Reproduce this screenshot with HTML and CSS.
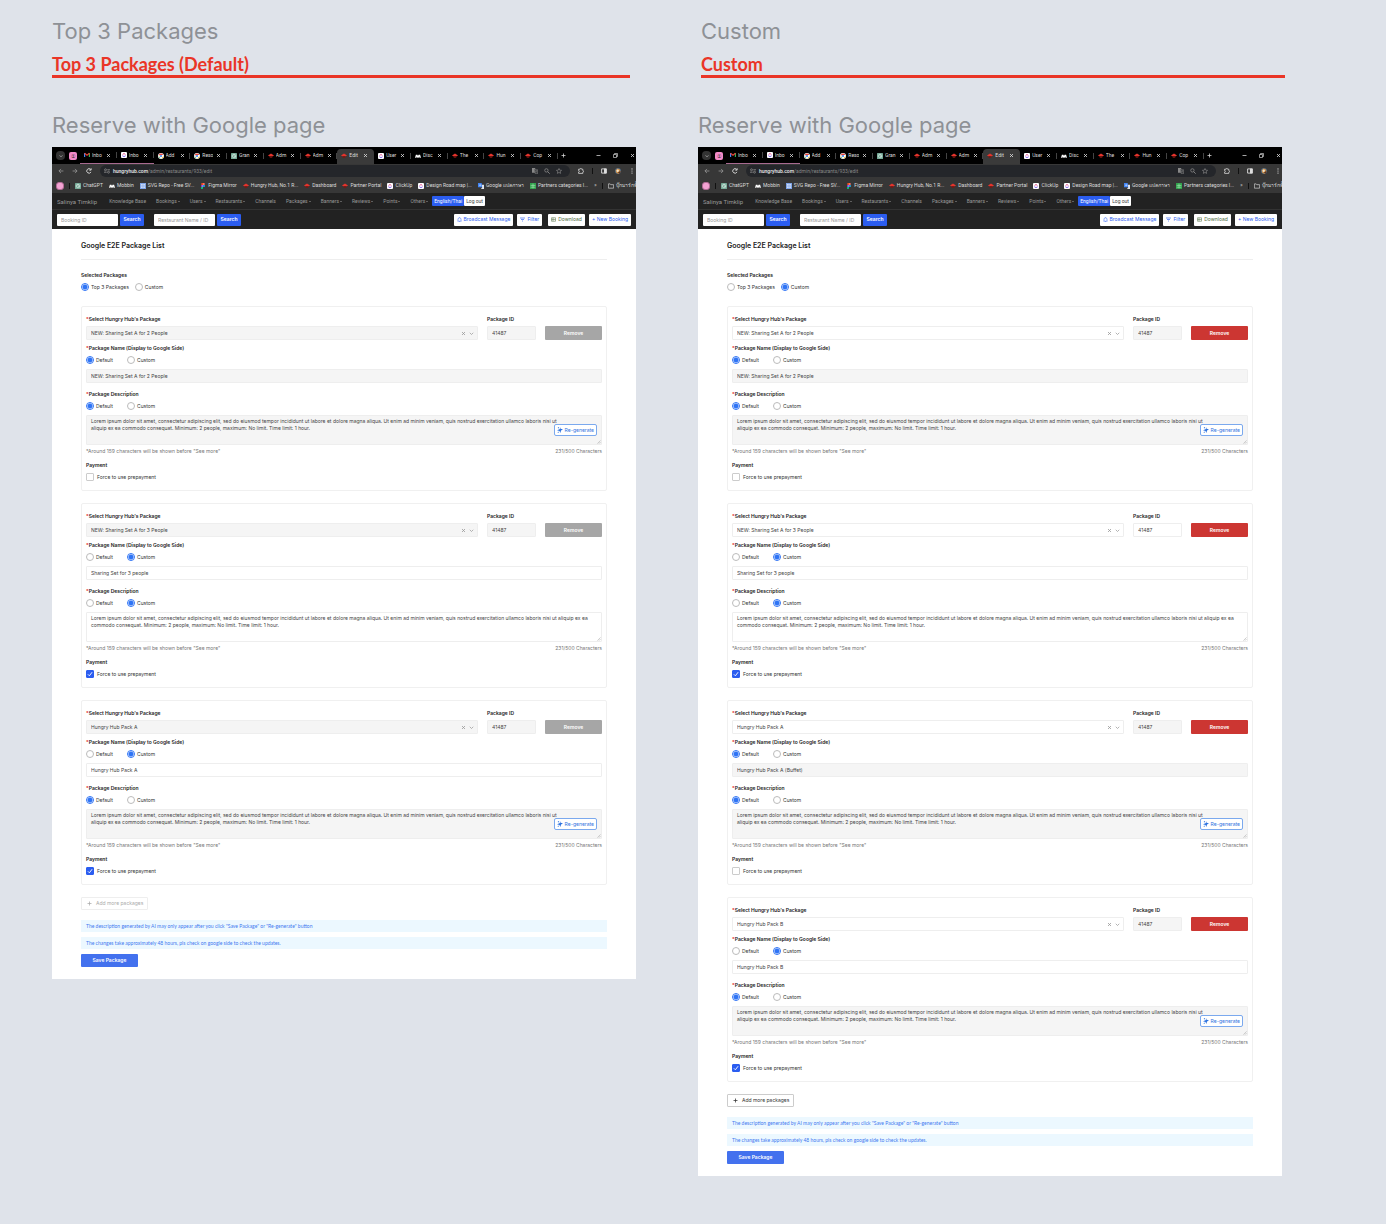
FILE: index.html
```html
<!DOCTYPE html>
<html lang="en">
<head>
  <meta charset="UTF-8">
  <meta name="viewport" content="width=device-width, initial-scale=1.0">
  <title>Reserve with Google page</title>
  <link rel="stylesheet" href="styles.css">
</head>
<body>
  <!-- Shared icons -->
  <svg class="sprite" aria-hidden="true">
    <symbol id="i-x" viewBox="0 0 10 10"><path d="M2 2l6 6M8 2L2 8" fill="none" stroke="currentColor" stroke-width="1.6"/></symbol>
    <symbol id="i-down" viewBox="0 0 10 10"><path d="M1.5 3.5L5 7l3.500-3.500" fill="none" stroke="currentColor" stroke-width="1.5"/></symbol>
    <symbol id="i-plus" viewBox="0 0 10 10"><path d="M5 1v8M1 5h8" fill="none" stroke="currentColor" stroke-width="1.500"/></symbol>
    <symbol id="i-min" viewBox="0 0 10 10"><path d="M1 5h8" stroke="currentColor" stroke-width="1.5"/></symbol>
    <symbol id="i-max" viewBox="0 0 10 10"><path d="M1 3h6v6H1zM3 3V1h6v6H7" fill="none" stroke="currentColor" stroke-width="1.3"/></symbol>
    <symbol id="i-back" viewBox="0 0 10 10"><path d="M9 5H1.500M5 1.500L1.500 5 5 8.500" fill="none" stroke="currentColor" stroke-width="1.3"/></symbol>
    <symbol id="i-fwd" viewBox="0 0 10 10"><path d="M1 5h7.500M5 1.500L8.500 5 5 8.500" fill="none" stroke="currentColor" stroke-width="1.3"/></symbol>
    <symbol id="i-reload" viewBox="0 0 10 10"><path d="M8.300 6.500A3.700 3.700 0 1 1 7.800 2.500M8.500 .5v3h-3" fill="none" stroke="currentColor" stroke-width="1.600"/></symbol>
    <symbol id="i-tune" viewBox="0 0 10 10"><path d="M5.500 3H10M0 7h4.500" stroke="currentColor" stroke-width="1.500"/><circle cx="2.500" cy="3" r="1.600" fill="none" stroke="currentColor" stroke-width="1.400"/><circle cx="7.500" cy="7" r="1.600" fill="none" stroke="currentColor" stroke-width="1.400"/></symbol>
    <symbol id="i-translate" viewBox="0 0 10 10"><path d="M0 0h5l1 2.500H3.500L5 8H0z" fill="currentColor"/><path d="M4 3h5.500v6.500H5.500z" fill="none" stroke="currentColor"/><path d="M5.500 5H9M7.200 4v1L5.800 7.500M6.300 5.500L8.500 8" fill="none" stroke="currentColor" stroke-width=".8"/></symbol>
    <symbol id="i-search" viewBox="0 0 10 10"><circle cx="4" cy="4" r="2.800" fill="none" stroke="currentColor" stroke-width="1.300"/><path d="M6 6l3.500 3.500" stroke="currentColor" stroke-width="1.500"/></symbol>
    <symbol id="i-star" viewBox="0 0 10 10"><path d="M5 .8l1.300 2.800 3 .3L7 6l.7 3L5 7.400 2.300 9 3 6 .7 3.900l3-.3z" fill="none" stroke="currentColor" stroke-width="1.100"/></symbol>
    <symbol id="i-ext" viewBox="0 0 10 10"><path d="M1 2h2.500a1.200 1.200 0 0 1 2.500 0H8v2.300a1.200 1.200 0 0 1 0 2.500V9H1V6.800a1.200 1.200 0 0 0 0-2.500z" fill="none" stroke="currentColor" stroke-width="1.300"/></symbol>
    <symbol id="i-panel" viewBox="0 0 10 10"><path d="M1 1.500h8v7H1z" fill="none" stroke="currentColor" stroke-width="1.500"/><path d="M5 1h4v8H5z" fill="currentColor"/></symbol>
    <symbol id="i-avatar" viewBox="0 0 10 10"><circle cx="5" cy="5" r="5" fill="#4d6a86"/><path d="M1 4l3-3 4 1 1 4-3 4-4-2z" fill="#c98b45"/><circle cx="4.500" cy="4.500" r="2" fill="#f3e3c8"/><path d="M5 7l4-2 .5 2L7 9.500z" fill="#5a3420"/></symbol>
    <symbol id="i-dots" viewBox="0 0 10 10"><circle cx="5" cy="1.500" r="1"/><circle cx="5" cy="5" r="1"/><circle cx="5" cy="8.500" r="1"/></symbol>
    <symbol id="i-folder" viewBox="0 0 10 10"><path d="M.6 8.600V1.500h3l1 1.300h4.800v5.800z" fill="none" stroke="currentColor" stroke-width="1.100"/></symbol>
    <symbol id="i-magic" viewBox="0 0 10 10"><path d="M6.500 0l-.8 3L10 3.800 6.800 5.800 5.500 10 4.200 6.500 0 5.500l4.200-1.800z" fill="currentColor"/><path d="M2 7l.4 1.200L3.500 8.500l-1 .5L2 10l-.5-1-1-.5 1.100-.3zM1.500.500h2v1.500h-2z" fill="currentColor"/></symbol>
    <symbol id="i-grip" viewBox="0 0 10 10"><path d="M1 9l8-8M5 9l4-4" stroke="currentColor" stroke-width="1.400"/></symbol>
    <symbol id="i-bell" viewBox="0 0 10 10"><path d="M1 8.500h8M2 8V4.500a3 3 0 0 1 6 0V8M4 9.500h2M5 .5v1" fill="none" stroke="currentColor"/></symbol>
    <symbol id="i-filter" viewBox="0 0 10 10"><path d="M0 2h10M2 5h6M4 8h2" stroke="currentColor" stroke-width="1.300"/></symbol>
    <symbol id="i-sheet" viewBox="0 0 10 10"><path d="M1 1.500h8v7H1zM4 1.500v7M1 5h8" fill="none" stroke="currentColor"/></symbol>
    <!-- favicons -->
    <symbol id="f-mail" viewBox="0 0 10 10"><path d="M1 8.500v-7" stroke="#4285f4" stroke-width="2"/><path d="M9 8.500v-7" stroke="#34a853" stroke-width="2"/><path d="M1 2l4 3.500L9 2" fill="none" stroke="#ea4335" stroke-width="2"/></symbol>
    <symbol id="f-click" viewBox="0 0 10 10"><rect width="10" height="10" rx="1.500" fill="#fff"/><path d="M2.500 4.500L5 2.300l2.500 2.200" fill="none" stroke="#e84a8a" stroke-width="1.500"/><path d="M2.300 6.300q2.700 3 5.400 0" fill="none" stroke="#7b5cf0" stroke-width="1.500"/></symbol>
    <symbol id="f-chrome" viewBox="0 0 10 10"><circle cx="5" cy="5" r="5" fill="#fff"/><path d="M1 4a4.200 4.200 0 0 1 8-.5H5z" fill="#ea4335"/><path d="M1 4.500L4.500 9A4.500 4.500 0 0 1 1 4.500" fill="#34a853"/><path d="M9.300 4.500L5.500 9a4.300 4.300 0 0 0 3.800-4.500" fill="#fbbc05"/><circle cx="5" cy="5" r="1.800" fill="#4285f4"/></symbol>
    <symbol id="f-gpt" viewBox="0 0 10 10"><rect width="10" height="10" rx="1" fill="#74a996"/><path d="M5 1.800l2.800 1.600v3.200L5 8.200 2.200 6.600V3.400zM5 1.800v3.400l2.800 1.400" fill="none" stroke="#fff" stroke-width=".8"/></symbol>
    <symbol id="f-hh" viewBox="0 0 10 10"><path d="M0 4l5-3 5 3-2 1.500H2z" fill="#e5342c"/><path d="M2.500 5.500h5L7 8H3z" fill="#7c1510"/></symbol>
    <symbol id="f-mob" viewBox="0 0 10 10"><path d="M0 8l1.500-5L4 3l1 2 1-2h2.500L10 8H7.500L7 6 6 8H4L3 6 2.500 8z" fill="#fff"/></symbol>
    <symbol id="f-svg" viewBox="0 0 10 10"><rect width="10" height="10" fill="#7ea4e8"/><path d="M2 2h2.300v2.300H2zM5.700 2H8v2.300H5.700zM2 5.700h2.300V8H2zM5.700 5.700H8V8H5.700z" fill="#fff"/></symbol>
    <symbol id="f-figma" viewBox="0 0 10 10"><path d="M5 0H3.500a1.600 1.600 0 0 0 0 3.300H5z" fill="#f24e1e"/><path d="M5 0h1.500a1.600 1.600 0 0 1 0 3.300H5z" fill="#ff7262"/><path d="M5 3.300H3.500a1.600 1.600 0 0 0 0 3.300H5z" fill="#a259ff"/><circle cx="6.600" cy="5" r="1.600" fill="#1abcfe"/><path d="M5 6.600H3.500A1.700 1.700 0 1 0 5 8.300z" fill="#0acf83"/></symbol>
    <symbol id="f-trans" viewBox="0 0 10 10"><path d="M0 0h6l1.500 7H0z" fill="#4285f4"/><path d="M6 3h4v7H5l2-3z" fill="#dfe4ec"/><path d="M4.500 3H3v1.500h1.500" fill="none" stroke="#fff"/></symbol>
    <symbol id="f-sheet" viewBox="0 0 10 10"><rect width="10" height="10" fill="#31a24c"/><path d="M5 1v8M1 4h8M1 7h8" stroke="#b9f0c4" stroke-width=".9"/></symbol>
  </svg>

  <main class="canvas">
    <section class="board">
      <h1>Top 3 Packages</h1>
      <h2>Top 3 Packages (Default)</h2>
      <p class="page-name">Reserve with Google page</p>
      <div class="window" id="top3"></div>
    </section>
    <section class="board board-custom">
      <h1>Custom</h1>
      <h2>Custom</h2>
      <p class="page-name">Reserve with Google page</p>
      <div class="window" id="custom"></div>
    </section>
  </main>

  <script src="script.js"></script>
</body>
</html>
```
FILE: styles.css
```css
* {
  margin: 0;
  padding: 0;
  box-sizing: border-box;
}

body {
  font-family: Inter, "Liberation Sans", sans-serif;
  background-color: #dfe3ea;
  color: #333;
}

button, input, select, textarea {
  font: inherit;
  color: inherit;
}

a {
  color: inherit;
  text-decoration: none;
}

.sprite {
  display: none;
}

.icon {
  width: 6px;
  height: 6px;
  fill: currentColor;
  flex: none;
}

.canvas {
  display: grid;
  grid-template-columns: 1fr 1fr;
  align-items: start;
  gap: 62px;
  padding: 16px 104px 40px 52px;
}

.board {
  min-width: 0;
}

.board h1, .page-name {
  font-size: 22px;
  font-weight: 400;
  line-height: 30px;
  color: #8e9196;
}

.board h2 {
  font-family: Lato, sans-serif;
  font-size: 18px;
  font-weight: 700;
  line-height: 22px;
  color: #ea3527;
  margin: 7px 6px 0 0;
  border-bottom: 3px solid #ea3527;
}

.board-custom h1 {
  margin-left: 3px;
}

.board-custom h2 {
  margin-left: 3px;
  margin-right: -3px;
}

.page-name {
  margin-top: 32px;
  margin-bottom: 7px;
}

/* Browser window */
.window {
  background: #fff;
  font-size: 5px;
  line-height: 7px;
  overflow: hidden;
}

.chrome {
  color: #ddd;
  background: #373737;
  font-family: Roboto, sans-serif;
}

.tab-bar {
  display: flex;
  align-items: center;
  height: 17px;
  background: #000;
}

.tab-start {
  display: flex;
  align-items: center;
  gap: 4px;
  width: 28px;
  padding-left: 4px;
}

.tab-search {
  display: grid;
  place-items: center;
  width: 9px;
  height: 9px;
  border: 0;
  border-radius: 4px;
  background: #333;
}

.tab-search .icon {
  width: 4px;
  height: 4px;
}

.group {
  width: 8px;
  height: 8px;
  border-radius: 2px;
  background: #f28ac8;
  color: #222;
  text-align: center;
  line-height: 8px;
}

.tabs {
  display: flex;
  flex: 1;
  align-self: stretch;
  list-style: none;
}

.tabs li {
  display: flex;
  flex: 1;
  align-items: center;
  gap: 2px;
  padding-left: 4px;
  min-width: 0;
  background: linear-gradient(#444, #444) right center / 1px 6px no-repeat;
}

.tabs li:nth-child(-n+2) {
  border-bottom: 1px solid #a76a90;
}

.tabs .active {
  margin: 2px 0 0;
  padding-bottom: 2px;
  border-radius: 4px 4px 0 0;
  background: #3a3a3a;
}

.tabs span {
  width: 11px;
  overflow: hidden;
  white-space: nowrap;
}

.tabs .close {
  width: 5px;
  height: 5px;
  margin-left: 1px;
}

.window-buttons {
  display: flex;
  align-items: center;
  justify-content: space-between;
  width: 78px;
  padding: 0 1px 0 3px;
}

.window-buttons .icon {
  width: 5px;
  height: 5px;
}

.window-buttons .icon:first-child {
  margin-right: 18px;
}

.address-bar {
  display: flex;
  align-items: center;
  gap: 8px;
  height: 14px;
  padding: 0 1px 0 6px;
}

.address-bar > .icon:nth-child(-n+2) {
  color: #999;
}

.url {
  display: flex;
  flex: 1;
  align-items: center;
  gap: 4px;
  height: 12px;
  padding: 0 6px 0 4px;
  border-radius: 6px;
  background: #24262a;
  color: #888;
}

.url > .icon {
  margin-right: 2px;
}

.url > .icon:first-child {
  margin-right: -1px;
}

.url b {
  font-weight: 500;
  color: #eee;
}

.url span {
  flex: 1;
}

.divider {
  flex: none;
  width: 1px;
  height: 6px;
  background: #111;
}

.bookmarks {
  display: flex;
  align-items: center;
  gap: 6px;
  height: 15px;
  padding: 0 1px 0 4px;
  white-space: nowrap;
}

.bookmarks .pin {
  flex: none;
  width: 8px;
  height: 8px;
  border: 1px solid #b26b96;
  border-radius: 3px;
  background: #f3a3d3;
}

.bookmarks .divider {
  margin: 0 -1px;
}

.bookmarks a {
  display: flex;
  align-items: center;
  gap: 2px;
}

.bookmarks .more {
  margin-left: auto;
}

/* Admin navigation */
.nav {
  display: flex;
  align-items: center;
  gap: 10px;
  height: 17px;
  padding: 0 5px;
  border-bottom: 1px solid #333;
  background: #222;
  color: #999;
  font-family: Roboto, sans-serif;
  white-space: nowrap;
}

.nav strong {
  margin-right: 2px;
  font-size: 6px;
  font-weight: 400;
}

.nav .drop::after {
  content: "";
  display: inline-block;
  margin-left: 1px;
  vertical-align: 1px;
  border: 1px solid transparent;
  border-top-color: #999;
  border-bottom: 0;
}

.nav-buttons {
  display: flex;
  margin-left: -6px;
}

.nav-buttons button, .tools button {
  border: 0;
  border-radius: 1px;
  background: #fff;
  color: #444;
}

.nav-buttons button {
  height: 10px;
  padding: 0 2px;
}

.nav-buttons button:first-child, .tools .search {
  background: #2b5df0;
  color: #fff;
}

.tools {
  display: flex;
  align-items: center;
  gap: 2px;
  height: 19px;
  padding: 0 5px;
  background: #222;
}

.tools input {
  width: 61px;
  height: 12px;
  padding: 0 4px;
  border: 0;
  border-radius: 1px;
}

.tools input::placeholder {
  color: #999;
}

.tools button {
  height: 12px;
  padding: 0 3px;
  white-space: nowrap;
}

.tools .search {
  width: 24px;
  margin-right: 8px;
  font-weight: 600;
}

.tools .action {
  display: flex;
  align-items: center;
  gap: 2px;
  margin-left: 2px;
  color: #2b5df0;
}

.tools .icon {
  width: 5px;
  height: 5px;
}

.tools .action.first {
  margin-left: auto;
}

.tools .action.download {
  margin-left: 4px;
  color: #4d6b3c;
}

/* Package form */
.content {
  padding: 12px 29px;
}

.content h3 {
  padding-bottom: 8px;
  border-bottom: 1px solid #eee;
  font-size: 7px;
  font-weight: 600;
  line-height: 10px;
  color: #222;
}

.mode {
  margin: 12px 0 15px;
  border: 0;
}

.label {
  display: block;
  font-weight: 600;
  line-height: 7px;
  color: #222;
}

.label.required::before {
  content: "*";
  color: #e02020;
}

.options {
  display: flex;
  margin-top: 4px;
}

.options label, .check {
  display: flex;
  align-items: center;
  gap: 2px;
  height: 8px;
}

.options label {
  width: 41px;
}

.mode .options label {
  width: auto;
  margin-right: 6px;
}

input[type="radio"], input[type="checkbox"] {
  appearance: none;
  flex: none;
  width: 8px;
  height: 8px;
  border: 1px solid #bbb;
  background: #fff;
}

input[type="radio"] {
  border-radius: 50%;
}

input[type="radio"]:checked {
  border-color: #2f74f5;
  background: radial-gradient(circle, #2f74f5 2px, #fff 3px);
}

input[type="checkbox"] {
  border-radius: 1px;
  border-color: #ccc;
}

input[type="checkbox"]:checked {
  border-color: #2b5df0;
  background: #2b5df0;
}

.tick {
  display: grid;
}

.tick > * {
  grid-area: 1 / 1;
  place-self: center;
}

.tick .icon {
  color: #fff;
}

.card {
  margin-bottom: 12px;
  padding: 9px 4px;
  border: 1px solid #f0f0f0;
  border-radius: 2px;
}

.package-row {
  display: grid;
  grid-template-columns: 1fr 49px 57px;
  align-items: end;
  gap: 9px;
  margin-bottom: 5px;
}

.field {
  display: block;
  width: 100%;
  height: 14px;
  padding: 0 4px;
  border: 1px solid #eee;
  border-radius: 1px;
  background: #fff;
  color: #444;
  appearance: none;
}

.field.grey {
  background: #f5f5f5;
}

.package-row .field, .package-row .remove {
  margin-top: 3px;
}

.select-box {
  position: relative;
}

.select-box div {
  position: absolute;
  right: 4px;
  bottom: 4px;
  display: flex;
  gap: 3px;
  color: #999;
}

.select-box .icon {
  width: 5px;
  height: 5px;
}

.remove {
  height: 14px;
  border: 0;
  border-radius: 1px;
  background: #cc3632;
  color: #fff;
  font-weight: 600;
}

.remove:disabled {
  background: #a6a6a6;
}

.options + .field, .options + .area {
  margin-top: 5px;
}

.name {
  margin-bottom: 8px;
}

.area {
  position: relative;
}

.area textarea {
  display: block;
  height: 30px;
  padding-top: 2px;
  resize: none;
  overflow: hidden;
  line-height: 7px;
}

.area .grey {
  padding-right: 43px;
}

.area .icon-grip {
  position: absolute;
  right: 1px;
  bottom: 1px;
  width: 4px;
  height: 4px;
  color: #aaa;
}

.regenerate {
  position: absolute;
  right: 5px;
  top: 9px;
  display: flex;
  align-items: center;
  gap: 2px;
  height: 12px;
  padding: 0 2px;
  border: 1px solid #7ba9ee;
  border-radius: 2px;
  background: #fff;
  color: #2f74e0;
}

.note {
  display: flex;
  justify-content: space-between;
  margin: 3px 0 7px;
  color: #777;
}

.check {
  margin-top: 4px;
  gap: 3px;
}

.add {
  display: flex;
  align-items: center;
  gap: 4px;
  height: 13px;
  margin-bottom: 10px;
  padding: 0 4px 0 5px;
  border: 1px solid #ccc;
  border-radius: 1px;
  background: #fff;
  color: #333;
}

.add .icon {
  width: 5px;
  height: 5px;
}

.add:disabled {
  border-color: #eee;
  color: #aaa;
}

.alert {
  height: 12px;
  margin-bottom: 5px;
  padding: 0 5px;
  background: #ecf8ff;
  color: #3f78f0;
  font-family: Lato, sans-serif;
  line-height: 12px;
}

.save {
  display: block;
  width: 57px;
  height: 13px;
  border: 0;
  border-radius: 1px;
  background: #4371ee;
  color: #fff;
  font-weight: 600;
}
```
FILE: script.js
```js
const icon = (id, cls = '') => `<svg class="icon ${cls}" aria-hidden="true"><use href="#${id}"/></svg>`;

const tabs = [
  ['f-mail', 'Inbo'], ['f-click', 'Inbo'], ['f-chrome', 'Add'], ['f-chrome', 'Reso'], ['f-gpt', 'Gran'],
  ['f-hh', 'Adm'], ['f-hh', 'Adm'], ['f-hh', 'Edit'], ['f-click', 'User'], ['f-mob', 'Disc'],
  ['f-hh', 'The'], ['f-hh', 'Hun'], ['f-hh', 'Cop']
];

const bookmarks = [
  ['f-gpt', 'ChatGPT'], ['f-mob', 'Mobbin'], ['f-svg', 'SVG Repo - Free SV...'], ['f-figma', 'Figma Mirror'],
  ['f-hh', 'Hungry Hub, No.1 R...'], ['f-hh', 'Dashboard'], ['f-hh', 'Partner Portal'], ['f-click', 'ClickUp'],
  ['f-click', 'Design Road map |...'], ['f-trans', 'Google แปลภาษา'], ['f-sheet', 'Partners categories I...']
];

const menu = ['Knowledge Base', 'Bookings+', 'Users+', 'Restaurants+', 'Channels', 'Packages+', 'Banners+', 'Reviews+', 'Points+', 'Others+'];

const lorem = 'Lorem ipsum dolor sit amet, consectetur adipiscing elit, sed do eiusmod tempor incididunt ut labore et dolore magna aliqua. Ut enim ad minim veniam, quis nostrud exercitation ullamco laboris nisi ut aliquip ex ea commodo consequat. Minimum: 2 people, maximum: No limit. Time limit: 1 hour.';

const pages = {
  top3: [
    { pack: 'NEW: Sharing Set A for 2 People', name: 'NEW: Sharing Set A for 2 People' },
    { pack: 'NEW: Sharing Set A for 3 People', name: 'Sharing Set for 3 people', customName: true, customText: true, paid: true },
    { pack: 'Hungry Hub Pack A', name: 'Hungry Hub Pack A', customName: true, paid: true }
  ],
  custom: [
    { pack: 'NEW: Sharing Set A for 2 People', name: 'NEW: Sharing Set A for 2 People' },
    { pack: 'NEW: Sharing Set A for 3 People', name: 'Sharing Set for 3 people', customName: true, customText: true, paid: true, whiteId: true },
    { pack: 'Hungry Hub Pack A', name: 'Hungry Hub Pack A (Buffet)' },
    { pack: 'Hungry Hub Pack B', name: 'Hungry Hub Pack B', customName: true, paid: true }
  ]
};

function browser() {
  return `
    <div class="chrome">
      <div class="tab-bar">
        <div class="tab-start">
          <button class="tab-search" aria-label="Search tabs">${icon('i-down')}</button>
          <span class="group">①</span>
        </div>
        <ul class="tabs">
          ${tabs.map(([i, t]) => `<li class="${t === 'Edit' ? 'active' : ''}">${icon(i)}<span>${t}</span>${icon('i-x', 'close')}</li>`).join('')}
        </ul>
        <div class="window-buttons">${['plus', 'min', 'max', 'x'].map(n => icon('i-' + n)).join('')}</div>
      </div>
      <div class="address-bar">
        ${icon('i-back')}${icon('i-fwd')}${icon('i-reload')}
        <div class="url">${icon('i-tune')}<span><b>hungryhub.com</b>/admin/restaurants/933/edit</span>${icon('i-translate')}${icon('i-search')}${icon('i-star')}</div>
        ${icon('i-ext')}<i class="divider"></i>${icon('i-panel')}${icon('i-avatar')}${icon('i-dots')}
      </div>
      <div class="bookmarks">
        <i class="pin"></i><i class="divider"></i>
        ${bookmarks.map(([i, t]) => `<a href="#">${icon(i)}${t}</a>`).join('')}
        <span class="more">»</span><i class="divider"></i>
        <a href="#">${icon('i-folder')}บุ๊กมาร์กทั้งหมด</a>
      </div>
    </div>
    <nav class="nav">
      <strong>Salinya Timklip</strong>
      ${menu.map(m => `<a href="#" class="${m.endsWith('+') ? 'drop' : ''}">${m.replace('+', '')}</a>`).join('')}
      <div class="nav-buttons"><button>English/Thai</button><button>Log out</button></div>
    </nav>
    <div class="tools">
      <input type="text" placeholder="Booking ID" aria-label="Booking ID"><button class="search">Search</button>
      <input type="text" placeholder="Restaurant Name / ID" aria-label="Restaurant Name / ID"><button class="search">Search</button>
      <button class="action first">${icon('i-bell')}Broadcast Message</button>
      <button class="action">${icon('i-filter')}Filter</button>
      <button class="action download">${icon('i-sheet')}Download</button>
      <button class="action">+ New Booking</button>
    </div>`;
}

function options(group, first, second, isSecond) {
  return `
    <div class="options">
      <label><input type="radio" name="${group}" ${isSecond ? '' : 'checked'}>${first}</label>
      <label><input type="radio" name="${group}" ${isSecond ? 'checked' : ''}>${second}</label>
    </div>`;
}

function card(p, key, isCustom) {
  return `
    <article class="card">
      <div class="package-row">
        <div class="select-box">
          <label class="label required" for="${key}-pack">Select Hungry Hub's Package</label>
          <select class="field ${isCustom ? '' : 'grey'}" id="${key}-pack"><option>${p.pack}</option></select>
          <div>${icon('i-x')}${icon('i-down')}</div>
        </div>
        <div>
          <label class="label" for="${key}-id">Package ID</label>
          <input class="field ${p.whiteId ? '' : 'grey'}" id="${key}-id" type="text" value="41487" readonly>
        </div>
        <button class="remove" ${isCustom ? '' : 'disabled'}>Remove</button>
      </div>
      <div class="name">
        <label class="label required" for="${key}-name">Package Name (Display to Google Side)</label>
        ${options(key + '-name-mode', 'Default', 'Custom', p.customName)}
        <input class="field ${p.customName ? '' : 'grey'}" id="${key}-name" type="text" value="${p.name}">
      </div>
      <label class="label required" for="${key}-text">Package Description</label>
      ${options(key + '-text-mode', 'Default', 'Custom', p.customText)}
      <div class="area">
        <textarea class="field ${p.customText ? '' : 'grey'}" id="${key}-text">${lorem}</textarea>
        ${p.customText ? '' : `<button class="regenerate">${icon('i-magic')}Re-generate</button>`}
        ${icon('i-grip', 'icon-grip')}
      </div>
      <div class="note"><span>*Around 159 characters will be shown before "See more"</span><span>231/500 Characters</span></div>
      <span class="label">Payment</span>
      <label class="check">
        <span class="tick"><input type="checkbox" ${p.paid ? 'checked' : ''}>${p.paid ? '<svg class="icon" viewBox="0 0 10 10"><path d="M1.500 5.500L4 8l4.500-6" fill="none" stroke="currentColor" stroke-width="1.500"/></svg>' : ''}</span>
        Force to use prepayment
      </label>
    </article>`;
}

Object.entries(pages).forEach(([id, packages]) => {
  const isCustom = id === 'custom';
  document.getElementById(id).innerHTML = browser() + `
    <div class="content">
      <h3>Google E2E Package List</h3>
      <fieldset class="mode">
        <span class="label">Selected Packages</span>
        ${options(id + '-mode', 'Top 3 Packages', 'Custom', isCustom)}
      </fieldset>
      ${packages.map((p, i) => card(p, id + i, isCustom)).join('')}
      <button class="add" ${isCustom ? '' : 'disabled'}>${icon('i-plus')}Add more packages</button>
      <p class="alert">The description generated by AI may only appear after you click "Save Package" or "Re-generate" button</p>
      <p class="alert">The changes take approximately 48 hours, pls check on google side to check the updates.</p>
      <button class="save">Save Package</button>
    </div>`;
});
```
